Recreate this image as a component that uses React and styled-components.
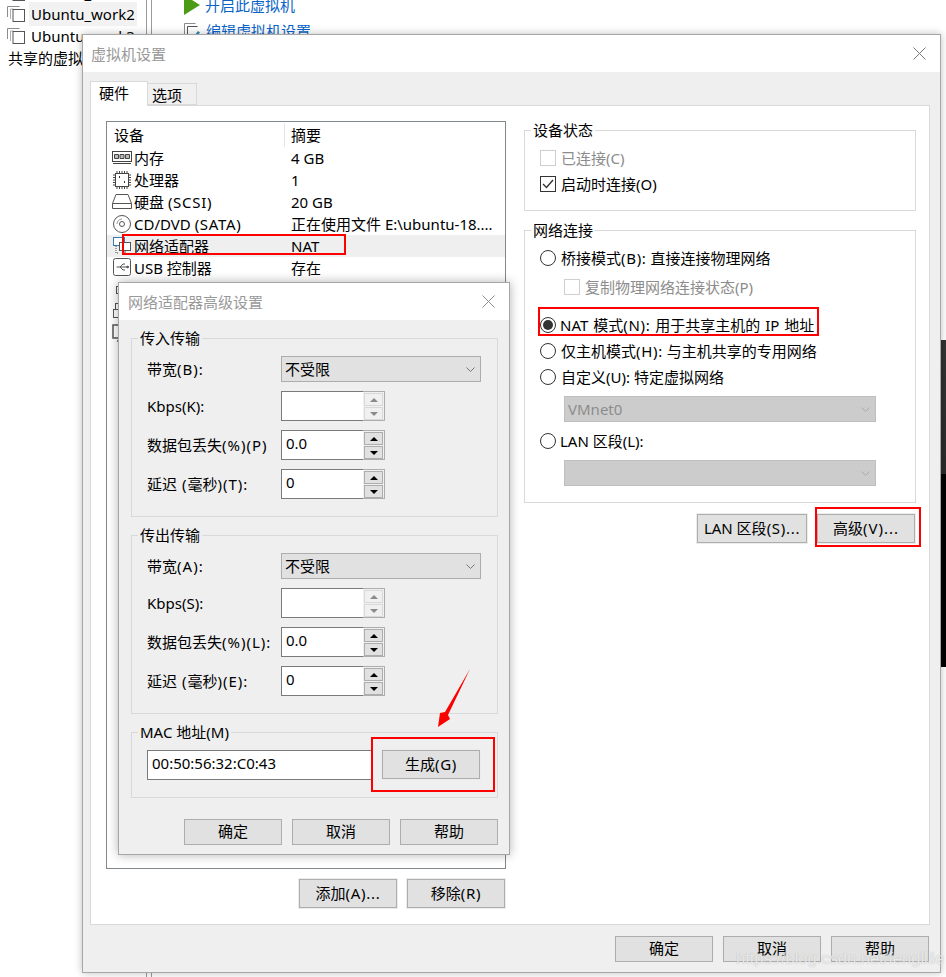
import React from 'react';
import styled, { createGlobalStyle } from 'styled-components';

const uiFont = `"Noto Sans", "Noto Sans CJK SC", sans-serif`;

const GlobalStyle = createGlobalStyle`
  html, body {
    margin: 0;
    padding: 0;
    background: #fff;
  }
  * {
    box-sizing: border-box;
  }
`;

const Desktop = styled.div`
  position: relative;
  width: 946px;
  height: 977px;
  overflow: hidden;
  display: flex;
  background: #fff;
  color: #000;
  font: 15px/22px ${uiFont};
`;

const TreePane = styled.div`
  width: 146px;
  flex: none;
  overflow: hidden;
`;

const TreeRow = styled.div`
  display: flex;
  align-items: center;
  height: 21.5px;
  padding-left: 7px;
  gap: 6px;
  white-space: nowrap;
  &:first-child {
    margin-top: -18px;
  }
`;

const TreeLabel = styled.span`
  padding: 0 2px;
  margin-left: -2px;
  height: 24px;
  line-height: 24px;
  background: ${(p) => (p.$selected ? '#f2f2f2' : 'transparent')};
`;

const SharedRow = styled.div`
  height: 22px;
  padding-left: 8px;
  white-space: nowrap;
`;

const Splitter = styled.div`
  width: 6px;
  flex: none;
  border-left: 1px solid #9a9a9a;
  border-right: 1px solid #9a9a9a;
`;

const ActionPane = styled.div`
  display: flex;
  flex-direction: column;
  padding: 0 0 0 32px;
  margin-top: -8px;
`;

const ActionRow = styled.div`
  display: flex;
  align-items: center;
  gap: 5px;
  height: 26px;
  color: #0a64c8;
  white-space: nowrap;
`;

const DarkStrip = styled.div`
  position: absolute;
  right: 0;
  top: 340px;
  width: 6px;
  height: 327px;
  background: linear-gradient(#333 0, #2a2a2a 41%, #000 41%);
`;

const Window = styled.div`
  position: absolute;
  left: 82px;
  top: 34px;
  width: 859px;
  height: 939px;
  display: flex;
  flex-direction: column;
  border: 1px solid #a6a6a6;
  background: #efefef;
  box-shadow: 0 0 8px rgba(0, 0, 0, 0.25);
`;

const TitleBar = styled.div`
  flex: none;
  height: 37px;
  display: flex;
  align-items: center;
  justify-content: space-between;
  padding: 0 14px 0 ${(p) => p.$left || 8}px;
  background: #fff;
  color: #999;
`;

const WindowBody = styled.div`
  flex: 1;
  display: flex;
  flex-direction: column;
  padding: 9px 10px 0 7px;
`;

const TabStrip = styled.div`
  display: flex;
  align-items: flex-end;
  height: 24px;
  position: relative;
  z-index: 1;
`;

const Tab = styled.div`
  display: flex;
  align-items: center;
  width: ${(p) => (p.$active ? 58 : 50)}px;
  height: ${(p) => (p.$active ? 25 : 22)}px;
  margin-bottom: ${(p) => (p.$active ? -1 : 0)}px;
  margin-left: ${(p) => (p.$active ? 0 : -1)}px;
  padding: ${(p) => (p.$active ? '0 0 2px 8px' : '2px 0 0 4px')};
  background: ${(p) => (p.$active ? '#fff' : '#f0f0f0')};
  border: 1px solid #d9d9d9;
  border-bottom: ${(p) => (p.$active ? 'none' : '1px solid #d9d9d9')};
`;

const TabPane = styled.div`
  width: 840px;
  height: 820px;
  display: flex;
  gap: 18px;
  padding: 15px 0 0 15px;
  background: #fff;
  border: 1px solid #d9d9d9;
`;

const LeftColumn = styled.div`
  width: 400px;
  display: flex;
  flex-direction: column;
`;

const RightColumn = styled.div`
  width: 392px;
  display: flex;
  flex-direction: column;
`;

const DeviceList = styled.div`
  height: 748px;
  border: 1px solid #82878c;
  padding-top: 1px;
  overflow: hidden;
`;

const ListHead = styled.div`
  display: grid;
  grid-template-columns: 170px 1fr;
  height: 24px;
  align-items: center;
  padding-left: 7px;
`;

const HeadCell = styled.div`
  height: 24px;
  line-height: 25px;
  & + & {
    border-left: 1px solid #e5e5e5;
    padding-left: 6px;
  }
`;

const ListRow = styled.div`
  display: grid;
  grid-template-columns: 172px 1fr;
  height: 22px;
  align-items: center;
  padding-left: 5px;
  white-space: nowrap;
  background: ${(p) => (p.$selected ? '#efefef' : 'transparent')};
`;

const DeviceName = styled.div`
  display: flex;
  align-items: center;
  gap: 2px;
`;

const DeviceSummary = styled.div`
  padding-left: 7px;
`;

const Ascii = styled.span`
  letter-spacing: ${(p) => (p.$wide ? 1 : 0.7)}px;
`;

const Buttons = styled.div`
  display: flex;
  justify-content: flex-end;
  gap: 10px;
  margin-top: ${(p) => p.$top || 0}px;
  padding-right: ${(p) => p.$right || 0}px;
`;

const Button = styled.button`
  flex: none;
  width: ${(p) => p.$width || 98}px;
  height: ${(p) => p.$height || 29}px;
  padding: 0 0 2px;
  background: #e1e1e1;
  border: 1px solid #adadad;
  outline: ${(p) => (p.$height ? 'none' : '1px solid #ececec')};
  color: #000;
  font: inherit;
`;

const GroupBox = styled.fieldset`
  margin: ${(p) => p.$top || 0}px 0 0;
  padding: ${(p) => p.$pad || '6px 0 0 15px'};
  height: ${(p) => p.$height}px;
  min-width: 0;
  border: 1px solid #d9d9d9;
`;

const GroupLegend = styled.legend`
  margin-left: -9px;
  padding: 0 2px;
  height: 18px;
  line-height: 18px;
`;

const OptionRow = styled.label`
  display: flex;
  align-items: center;
  height: 26px;
  gap: ${(p) => p.$gap || 5}px;
  margin-top: ${(p) => p.$top || 0}px;
  margin-left: ${(p) => p.$left || 0}px;
  color: ${(p) => (p.$disabled ? '#8c8c8c' : '#000')};
  word-spacing: ${(p) => p.$words || 0}px;
  white-space: nowrap;
`;

const CheckBox = styled.span`
  flex: none;
  width: 16px;
  height: 16px;
  display: flex;
  align-items: center;
  justify-content: center;
  background: #fff;
  border: 1px solid ${(p) => (p.$disabled ? '#cfcfcf' : '#333')};
`;

const Radio = styled.span`
  flex: none;
  width: 16px;
  height: 16px;
  display: flex;
  align-items: center;
  justify-content: center;
  background: #fff;
  border: 1px solid #333;
  border-radius: 50%;
  &::after {
    content: '';
    width: 10px;
    height: 10px;
    border-radius: 50%;
    background: ${(p) => (p.$checked ? '#333' : 'transparent')};
  }
`;

const Select = styled.div`
  display: flex;
  align-items: center;
  justify-content: space-between;
  width: ${(p) => p.$width || 200}px;
  height: 26px;
  margin-top: ${(p) => p.$top || 0}px;
  margin-left: ${(p) => p.$left || 0}px;
  padding: 0 5px 0 3px;
  background: ${(p) => (p.$disabled ? '#ccc' : '#e1e1e1')};
  border: 1px solid ${(p) => (p.$disabled ? '#bfbfbf' : '#adadad')};
  color: ${(p) => (p.$disabled ? '#8c8c8c' : '#000')};
`;

const Dialog = styled.div`
  position: absolute;
  left: 118px;
  top: 282px;
  width: 392px;
  height: 573px;
  display: flex;
  flex-direction: column;
  background: #efefef;
  border: 1px solid #a6a6a6;
  box-shadow: 0 0 10px rgba(0, 0, 0, 0.3);
`;

const DialogBody = styled.div`
  flex: 1;
  display: flex;
  flex-direction: column;
  padding: 9px 11px 0 12px;
`;

const RateGrid = styled.div`
  display: grid;
  grid-template-columns: 134px auto;
  justify-content: start;
  align-items: center;
  row-gap: 9px;
`;

const RateLabel = styled.div`
  white-space: nowrap;
`;

const SpinBox = styled.div`
  display: flex;
  width: 104px;
  height: 30px;
  background: #f0f0f0;
  border: 1px solid #adadad;
`;

const SpinField = styled.div`
  width: 82px;
  height: 30px;
  margin: -1px 0 0 -1px;
  padding: 0 4px;
  line-height: 24px;
  background: #fff;
  border: 1px solid #7a7a7a;
  border-right: none;
`;

const SpinArrows = styled.div`
  display: flex;
  flex-direction: column;
  gap: 1px;
  margin: 1px 0 0 1px;
`;

const SpinArrow = styled.div`
  width: 19px;
  height: 13px;
  display: flex;
  align-items: center;
  justify-content: center;
  background: ${(p) => (p.$disabled ? '#f0f0f0' : '#e1e1e1')};
  border: 1px solid ${(p) => (p.$disabled ? '#d9d9d9' : '#adadad')};
  &::after {
    content: '';
    border-left: 4px solid transparent;
    border-right: 4px solid transparent;
    border-bottom: ${(p) => (p.$down ? 'none' : `4px solid ${p.$disabled ? '#8a8a8a' : '#000'}`)};
    border-top: ${(p) => (p.$down ? `4px solid ${p.$disabled ? '#8a8a8a' : '#000'}` : 'none')};
  }
`;

const MacRow = styled.div`
  display: flex;
  gap: 10px;
`;

const MacField = styled.div`
  width: 225px;
  height: 30px;
  padding: 0 4px;
  line-height: 24px;
  background: #fff;
  border: 1px solid #7a7a7a;
  border-right: none;
`;

const RedBox = styled.div`
  position: absolute;
  left: ${(p) => p.$x}px;
  top: ${(p) => p.$y}px;
  width: ${(p) => p.$w}px;
  height: ${(p) => p.$h}px;
  border: 2px solid #f00;
  pointer-events: none;
`;

const Arrow = styled.svg`
  position: absolute;
  left: 434px;
  top: 666px;
`;

const Watermark = styled.div`
  position: absolute;
  left: 736px;
  top: 947px;
  font: 16.5px/22px "Liberation Sans", sans-serif;
  color: rgba(255, 255, 255, 0.72);
  text-shadow: 0 0 1px rgba(120, 120, 120, 0.55);
  white-space: nowrap;
`;

function VmIcon() {
  return (
    <svg width="18" height="16" viewBox="0 0 18 16" fill="none">
      <path d="M.5 11V.5h12" stroke="#8c8c8c" />
      <path d="M3.5 13V3h3" stroke="#b0b0b0" />
      <rect x="6" y="3.5" width="11.5" height="12" fill="#fff" stroke="#555" />
    </svg>
  );
}

function EditIcon() {
  return (
    <svg width="17" height="16" viewBox="0 0 17 16" fill="none">
      <path d="M.5 11V.5h11" stroke="#8c8c8c" />
      <path d="M3.5 14V3.5h10" stroke="#555" />
      <path d="M10 13l4-5 2 1.5-4 5z" fill="#2a8fb5" />
    </svg>
  );
}

function MemoryIcon() {
  return (
    <svg width="20" height="14" viewBox="0 0 20 14" fill="none" stroke="#444">
      <rect x=".5" y=".5" width="19" height="10" fill="#fff" />
      <path d="M2.5 3.5h4v4h-4zM8 3.5h4v4H8zM13.5 3.5h4v4h-4z" fill="#bbb" />
      <path d="M1 12.5h18" />
    </svg>
  );
}

function CpuIcon() {
  return (
    <svg width="20" height="20" viewBox="0 0 20 20" fill="none" stroke="#444">
      <rect x="3.5" y="3.5" width="13" height="13" fill="#fff" />
      <path d="M5 1v2M7.5 1v2M10 1v2M12.5 1v2M15 1v2M5 17v2M7.5 17v2M10 17v2M12.5 17v2M15 17v2M1 5h2M1 7.5h2M1 10h2M1 12.5h2M1 15h2M17 5h2M17 7.5h2M17 10h2M17 12.5h2M17 15h2" />
      <path d="M7 7h1M12 12h1" stroke="#333" strokeWidth="2" />
    </svg>
  );
}

function DiskIcon() {
  return (
    <svg width="20" height="16" viewBox="0 0 20 16" fill="none" stroke="#555">
      <path d="M4 .5h12l3.5 9v5H.5v-5z" fill="#fff" />
      <path d="M.5 9.5h19" />
    </svg>
  );
}

function CdIcon() {
  return (
    <svg width="20" height="20" viewBox="0 0 20 20" fill="none" stroke="#555">
      <circle cx="10" cy="10" r="8.5" fill="#fff" />
      <circle cx="10" cy="10" r="2.5" />
      <path d="M5 10a5 5 0 0 1 5-5" stroke="#999" />
    </svg>
  );
}

function NetworkIcon() {
  return (
    <svg width="20" height="18" viewBox="0 0 20 18" fill="none" stroke="#555">
      <rect x="1.5" y=".5" width="11" height="8" fill="#fff" stroke="#3c78b4" />
      <rect x="7.5" y="5.5" width="11" height="8" fill="#fff" />
      <path d="M13 13.5v3M10 16.5h6" />
      <path d="M4 9v7h3" strokeDasharray="1 1" />
    </svg>
  );
}

function UsbIcon() {
  return (
    <svg width="20" height="20" viewBox="0 0 20 20" fill="none" stroke="#555">
      <rect x="1.5" y=".5" width="17" height="17" rx="2" fill="#fff" />
      <path d="M4.5 9h11M8 9l3-3h2M8 9l3 3h2" />
      <path d="M15 8l2 1-2 1z" fill="#555" />
    </svg>
  );
}

function SoundIcon() {
  return (
    <svg width="20" height="20" viewBox="0 0 20 20" fill="none" stroke="#555">
      <rect x="4.5" y="6.5" width="9" height="7" fill="#fff" />
    </svg>
  );
}

function PrinterIcon() {
  return (
    <svg width="20" height="20" viewBox="0 0 20 20" fill="none" stroke="#555">
      <rect x="3.5" y="1.5" width="7" height="6" fill="#fff" />
      <rect x="1.5" y="7.5" width="13" height="8" fill="#fff" />
    </svg>
  );
}

function MonitorIcon() {
  return (
    <svg width="20" height="20" viewBox="0 0 20 20" fill="none" stroke="#555" strokeWidth="1.5">
      <rect x="1" y="1" width="14" height="13" fill="#fff" />
      <path d="M5 17h6" />
    </svg>
  );
}

function Chevron({ color }) {
  return (
    <svg width="9" height="5" viewBox="0 0 9 5" fill="none" stroke={color}>
      <path d="M.5.5l4 4 4-4" />
    </svg>
  );
}

function Tick() {
  return (
    <svg width="12" height="10" viewBox="0 0 12 10" fill="none" stroke="#333" strokeWidth="1.4">
      <path d="M1 5l3.5 3.5L11 1" />
    </svg>
  );
}

function Close({ color }) {
  return (
    <svg width="13" height="13" viewBox="0 0 13 13" fill="none" stroke={color}>
      <path d="M.5.5l12 12M12.5.5l-12 12" />
    </svg>
  );
}

function SpinInput({ value, disabled }) {
  return (
    <SpinBox>
      <SpinField>{value}</SpinField>
      <SpinArrows>
        <SpinArrow $disabled={disabled} />
        <SpinArrow $disabled={disabled} $down />
      </SpinArrows>
    </SpinBox>
  );
}

const devices = [
  { Icon: MemoryIcon, name: '内存', summary: '4 GB' },
  { Icon: CpuIcon, name: '处理器', summary: '1' },
  { Icon: DiskIcon, name: <span>硬盘 <Ascii>(SCSI)</Ascii></span>, summary: '20 GB' },
  { Icon: CdIcon, name: <span>CD/DVD <Ascii>(SATA)</Ascii></span>, summary: '正在使用文件 E:\\ubuntu-18....' },
  { Icon: NetworkIcon, name: '网络适配器', summary: 'NAT', selected: true },
  { Icon: UsbIcon, name: 'USB 控制器', summary: '存在' },
  { Icon: SoundIcon, name: '声卡', summary: '自动检测' },
  { Icon: PrinterIcon, name: '打印机', summary: '存在' },
  { Icon: MonitorIcon, name: '显示器', summary: '自动检测' },
];

function RateGroup({ title, top, keys }) {
  return (
    <GroupBox $top={top} $height={188} $pad="9px 0 0 15px">
      <GroupLegend>{title}</GroupLegend>
      <RateGrid>
        <RateLabel>带宽<Ascii $wide>({keys[0]}):</Ascii></RateLabel>
        <Select>
          不受限
          <Chevron color="#777" />
        </Select>
        <RateLabel>Kbps({keys[1]}):</RateLabel>
        <SpinInput value="" disabled />
        <RateLabel>数据包丢失<Ascii $wide>(%){keys[2]}</Ascii></RateLabel>
        <SpinInput value="0.0" />
        <RateLabel>延迟<Ascii $wide> (</Ascii>毫秒<Ascii $wide>)({keys[3]}):</Ascii></RateLabel>
        <SpinInput value="0" />
      </RateGrid>
    </GroupBox>
  );
}

export default function App() {
  return (
    <>
      <GlobalStyle />
      <Desktop>
        <TreePane>
          <TreeRow><VmIcon /><TreeLabel>Ubuntu_work</TreeLabel></TreeRow>
          <TreeRow><VmIcon /><TreeLabel $selected>Ubuntu_work2</TreeLabel></TreeRow>
          <TreeRow><VmIcon /><TreeLabel>Ubuntu_work3</TreeLabel></TreeRow>
          <SharedRow>共享的虚拟机</SharedRow>
        </TreePane>
        <Splitter />
        <ActionPane>
          <ActionRow>
            <svg width="16" height="20" viewBox="0 0 16 20"><path d="M0 0l16 10L0 20z" fill="#4c9a17" /></svg>
            开启此虚拟机
          </ActionRow>
          <ActionRow><EditIcon />编辑虚拟机设置</ActionRow>
        </ActionPane>
        <DarkStrip />

        <Window>
          <TitleBar>
            虚拟机设置
            <Close color="#777" />
          </TitleBar>
          <WindowBody>
            <TabStrip>
              <Tab $active>硬件</Tab>
              <Tab>选项</Tab>
            </TabStrip>
            <TabPane>
              <LeftColumn>
                <DeviceList>
                  <ListHead>
                    <HeadCell>设备</HeadCell>
                    <HeadCell>摘要</HeadCell>
                  </ListHead>
                  {devices.map(({ Icon, name, summary, selected }, i) => (
                    <ListRow key={i} $selected={selected}>
                      <DeviceName><Icon />{name}</DeviceName>
                      <DeviceSummary>{summary}</DeviceSummary>
                    </ListRow>
                  ))}
                </DeviceList>
                <Buttons $top={10} $right={1}>
                  <Button>添加<Ascii>(A)...</Ascii></Button>
                  <Button>移除<Ascii>(R)</Ascii></Button>
                </Buttons>
              </LeftColumn>
              <RightColumn>
                <GroupBox $height={90}>
                  <GroupLegend>设备状态</GroupLegend>
                  <OptionRow $disabled>
                    <CheckBox $disabled />
                    已连接(C)
                  </OptionRow>
                  <OptionRow>
                    <CheckBox><Tick /></CheckBox>
                    启动时连接(O)
                  </OptionRow>
                </GroupBox>
                <GroupBox $top={10} $height={282}>
                  <GroupLegend>网络连接</GroupLegend>
                  <OptionRow><Radio /><span>桥接模式<Ascii>(B):</Ascii> 直接连接物理网络</span></OptionRow>
                  <OptionRow $top={3} $left={24} $disabled>
                    <CheckBox $disabled />
                    复制物理网络连接状态(P)
                  </OptionRow>
                  <OptionRow $top={12} $gap={4} $words={1}>
                    <Radio $checked />
                    <span>NAT 模式<Ascii>(N):</Ascii> 用于共享主机的 IP 地址</span>
                  </OptionRow>
                  <OptionRow><Radio /><span>仅主机模式<Ascii>(H):</Ascii> 与主机共享的专用网络</span></OptionRow>
                  <OptionRow><Radio />自定义(U): 特定虚拟网络</OptionRow>
                  <Select $disabled $width={312} $top={6} $left={24}>
                    VMnet0
                    <Chevron color="#aaa" />
                  </Select>
                  <OptionRow $top={6} $gap={4}><Radio />LAN 区段(L):</OptionRow>
                  <Select $disabled $width={312} $top={6} $left={24}>
                    <span />
                    <Chevron color="#aaa" />
                  </Select>
                </GroupBox>
                <Buttons $top={11} $right={1}>
                  <Button $width={110}>LAN 区段<Ascii>(S)...</Ascii></Button>
                  <Button>高级<Ascii $wide>(V)...</Ascii></Button>
                </Buttons>
              </RightColumn>
            </TabPane>
            <Buttons $top={11} $right={1}>
              <Button $height={26}>确定</Button>
              <Button $height={26}>取消</Button>
              <Button $height={26}>帮助</Button>
            </Buttons>
          </WindowBody>
        </Window>

        <Dialog>
          <TitleBar $left={9}>
            网络适配器高级设置
            <Close color="#8c8c8c" />
          </TitleBar>
          <DialogBody>
            <RateGroup title="传入传输" keys={['B', 'K', '(P)', 'T']} />
            <RateGroup title="传出传输" top={9} keys={['A', 'S', '(L):', 'E']} />
            <GroupBox $top={9} $height={75} $pad="9px 0 0 15px">
              <GroupLegend>MAC 地址(M)</GroupLegend>
              <MacRow>
                <MacField>00:50:56:32:C0:43</MacField>
                <Button>生成<Ascii>(G)</Ascii></Button>
              </MacRow>
            </GroupBox>
            <Buttons $top={21}>
              <Button $height={26}>确定</Button>
              <Button $height={26}>取消</Button>
              <Button $height={26}>帮助</Button>
            </Buttons>
          </DialogBody>
        </Dialog>

        <RedBox $x={122} $y={234} $w={224} $h={21} />
        <RedBox $x={538} $y={307} $w={281} $h={29} />
        <RedBox $x={815} $y={507} $w={106} $h={40} />
        <RedBox $x={371} $y={737} $w={124} $h={55} />
        <Arrow width="40" height="66" viewBox="0 0 40 66">
          <path d="M36 3L11 46l-5 1-2 14 12-8-2-4z" fill="#f00" />
        </Arrow>
        <Watermark>https://blog.csdn.net/fenglllle</Watermark>
      </Desktop>
    </>
  );
}
